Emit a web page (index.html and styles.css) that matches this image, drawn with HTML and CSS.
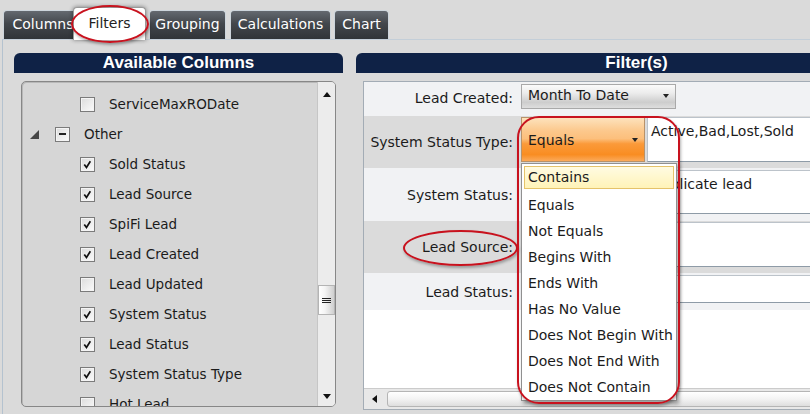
FILE: index.html
```html
<!DOCTYPE html>
<html>
<head>
<meta charset="utf-8">
<link rel="stylesheet" href="styles.css">
</head>
<body>
<div class="app">
  <nav class="tabs">
    <div class="tab tab-columns">Columns</div>
    <div class="tab tab-filters active">Filters</div>
    <div class="tab tab-grouping">Grouping</div>
    <div class="tab tab-calc">Calculations</div>
    <div class="tab tab-chart">Chart</div>
  </nav>
  <main class="content">
    <section class="col-left">
      <h2 class="panel-title">Available Columns</h2>
      <div class="listbox">
        <ul class="tree">
          <li class="item"><span class="cb"></span>ServiceMaxRODate</li>
          <li class="group"><span class="expander"></span><span class="tri"></span>Other</li>
          <li class="item"><span class="cb on"><svg viewBox="0 0 15 15"><path d="M3.8 7.6 L6.3 11 L10.8 3.8"/></svg></span>Sold Status</li>
          <li class="item"><span class="cb on"><svg viewBox="0 0 15 15"><path d="M3.8 7.6 L6.3 11 L10.8 3.8"/></svg></span>Lead Source</li>
          <li class="item"><span class="cb on"><svg viewBox="0 0 15 15"><path d="M3.8 7.6 L6.3 11 L10.8 3.8"/></svg></span>SpiFi Lead</li>
          <li class="item"><span class="cb on"><svg viewBox="0 0 15 15"><path d="M3.8 7.6 L6.3 11 L10.8 3.8"/></svg></span>Lead Created</li>
          <li class="item"><span class="cb"></span>Lead Updated</li>
          <li class="item"><span class="cb on"><svg viewBox="0 0 15 15"><path d="M3.8 7.6 L6.3 11 L10.8 3.8"/></svg></span>System Status</li>
          <li class="item"><span class="cb on"><svg viewBox="0 0 15 15"><path d="M3.8 7.6 L6.3 11 L10.8 3.8"/></svg></span>Lead Status</li>
          <li class="item"><span class="cb on"><svg viewBox="0 0 15 15"><path d="M3.8 7.6 L6.3 11 L10.8 3.8"/></svg></span>System Status Type</li>
          <li class="item"><span class="cb"></span>Hot Lead</li>
        </ul>
        <div class="vscroll">
          <div class="sb-btn"><span class="arr-up"></span></div>
          <div class="sb-track"><div class="sb-thumb"><span class="grip"></span></div></div>
          <div class="sb-btn sb-btn-down"><span class="arr-down"></span></div>
        </div>
      </div>
    </section>
    <section class="col-right">
      <h2 class="panel-title">Filter(s)</h2>
      <div class="filter-box">
        <div class="frow r1 light">
          <label class="flabel">Lead Created:</label>
          <div class="fctl">
            <div class="select gray w155"><span>Month To Date</span><span class="caret"></span></div>
          </div>
        </div>
        <div class="frow r2 dark">
          <label class="flabel">System Status Type:</label>
          <div class="fctl">
            <div class="select orange w124"><span>Equals</span><span class="caret"></span></div>
            <div class="tinput">Active,Bad,Lost,Sold</div>
          </div>
        </div>
        <div class="frow r3 light">
          <label class="flabel">System Status:</label>
          <div class="fctl">
            <div class="select gray w124"><span class="caret"></span></div>
            <div class="tinput">Duplicate lead</div>
          </div>
        </div>
        <div class="frow r4 dark">
          <label class="flabel">Lead Source:</label>
          <div class="fctl">
            <div class="select gray w124"><span class="caret"></span></div>
            <div class="tinput"></div>
          </div>
        </div>
        <div class="frow r5 light">
          <label class="flabel">Lead Status:</label>
          <div class="fctl">
            <div class="select gray w124"><span class="caret"></span></div>
            <div class="tinput"></div>
          </div>
        </div>
        <div class="fill"></div>
        <div class="hscroll">
          <div class="hs-btn"><span class="arr-left"></span></div>
          <div class="hs-thumb"></div>
        </div>
      </div>
    </section>
  </main>

  <ul class="popup">
    <li class="opt hl">Contains</li>
    <li class="opt">Equals</li>
    <li class="opt">Not Equals</li>
    <li class="opt">Begins With</li>
    <li class="opt">Ends With</li>
    <li class="opt">Has No Value</li>
    <li class="opt">Does Not Begin With</li>
    <li class="opt">Does Not End With</li>
    <li class="opt">Does Not Contain</li>
  </ul>

  <div class="mark mark-tab"></div>
  <div class="mark mark-label"></div>
  <div class="mark mark-list"></div>
</div>
</body>
</html>
```

FILE: styles.css
```css
* { box-sizing: border-box; }
html, body { margin: 0; padding: 0; }
body {
  width: 810px;
  height: 414px;
  overflow: hidden;
  background: #dadada;
  font-family: "DejaVu Sans", Verdana, sans-serif;
  font-size: 14px;
  color: #1b1b1b;
}
.app { position: relative; width: 810px; height: 414px; overflow: hidden; }

/* tabs */
.tabs {
  display: flex;
  align-items: flex-end;
  height: 39px;
  padding-left: 3px;
  position: relative;
  z-index: 2;
}
.tab {
  height: 29px;
  line-height: 27px;
  text-align: center;
  color: #fff;
  white-space: nowrap;
  background: linear-gradient(#646970, #43474c 45%, #303438);
  border: 1px solid #cdd5dc;
  border-bottom: none;
  border-radius: 4px 4px 0 0;
}
.tab-columns { width: 77px; padding-left: 3px; }
.tab-filters {
  width: 73px;
  height: 33px;
  margin-left: -7px;
  margin-bottom: -1px;
  padding-top: 2px;
  background: #fff;
  color: #222;
  border-color: #9a9a9a;
  box-shadow: 0 0 4px rgba(0, 0, 0, 0.45);
  position: relative;
  z-index: 1;
}
.tab-grouping { width: 77px; margin-left: 3px; }
.tab-calc { width: 101px; margin-left: 4px; }
.tab-chart { width: 55px; margin-left: 3px; }

/* content */
.content {
  display: flex;
  margin-left: 2px;
  height: 375px;
  border-top: 1px solid #c3ced8;
  border-left: 1px solid #b4c2cf;
  padding: 13px 0 0 11px;
}
.col-left { width: 329px; flex: none; }
.col-right { width: 561px; flex: none; margin-left: 13px; }
.panel-title {
  margin: 0;
  height: 20px;
  line-height: 20px;
  background: #0f2246;
  color: #fff;
  border-radius: 6px 6px 0 0;
  text-align: center;
  font-family: "Liberation Sans", Arial, sans-serif;
  font-weight: bold;
  font-size: 17px;
}

/* list box */
.listbox {
  margin: 8px 7px 0;
  height: 326px;
  border: 1px solid #878787;
  border-radius: 5px;
  background: #d6d6d6;
  display: flex;
  overflow: hidden;
  box-shadow: inset 1px 1px 0 #b8b8b8;
}
.tree {
  flex: 1;
  list-style: none;
  margin: 0;
  padding: 7px 0 0;
  font-size: 13.5px;
  overflow: hidden;
}
.tree li {
  height: 30px;
  display: flex;
  align-items: center;
  white-space: nowrap;
}
.item { padding-left: 58px; }
.group { padding-left: 8px; }
.expander {
  width: 0;
  height: 0;
  border-left: 9px solid transparent;
  border-bottom: 9px solid #474747;
  margin-right: 16px;
  margin-top: 1px;
}
.cb, .tri {
  width: 15px;
  height: 15px;
  border: 1px solid #7b7b7b;
  background: linear-gradient(135deg, #dcdcdc, #fbfbfb);
  box-shadow: inset 0 0 0 1px #f4f4f4;
  margin-right: 14px;
  flex: none;
  display: flex;
  align-items: center;
  justify-content: center;
}
.cb svg { width: 13px; height: 13px; }
.cb svg path { fill: none; stroke: #111; stroke-width: 2; }
.tri::before {
  content: "";
  width: 7px;
  height: 2px;
  background: #222;
}

.vscroll {
  width: 18px;
  flex: none;
  background: #ececec;
  border-left: 1px solid #c6c6c6;
  display: flex;
  flex-direction: column;
}
.sb-btn {
  height: 24px;
  display: flex;
  align-items: center;
  justify-content: center;
}
.sb-btn-down { height: 20px; }
.arr-up { width: 0; height: 0; border: 4px solid transparent; border-top: none; border-bottom: 5px solid #111; }
.arr-down { width: 0; height: 0; border: 4px solid transparent; border-bottom: none; border-top: 5px solid #111; }
.sb-track { flex: 1; }
.sb-thumb {
  margin-top: 179px;
  height: 30px;
  background: linear-gradient(90deg, #ffffff, #f4f4f4 40%, #cfcfcf);
  border: 1px solid #b4b4b4;
  display: flex;
  align-items: center;
  justify-content: center;
}
.grip {
  width: 9px;
  height: 5px;
  border-top: 1px solid #222;
  border-bottom: 1px solid #222;
  position: relative;
}
.grip::after {
  content: "";
  position: absolute;
  left: 0;
  right: 0;
  top: 1px;
  height: 1px;
  background: #222;
}

/* filters */
.filter-box {
  margin: 8px 7px 0;
  height: 329px;
  border: 1px solid #a3acb5;
  background: #fff;
  display: flex;
  flex-direction: column;
}
.frow {
  display: grid;
  grid-template-columns: 149px 1fr;
  column-gap: 8px;
  flex: none;
}
.light { background: #f1f2f4; }
.dark { background: #dbdbdb; }
.r1 { height: 34px; }
.r2 { height: 52px; }
.r3 { height: 53px; }
.r4 { height: 52px; }
.r5 { height: 37px; }
.flabel { align-self: center; text-align: right; white-space: nowrap; }
.r1 .flabel { margin-top: -3px; }
.fctl { display: flex; }
.r1 .fctl { padding-top: 2px; }
.r2 .fctl { padding-top: 1px; height: 46px; }
.r3 .fctl { padding-top: 2px; height: 46px; }
.r4 .fctl { padding-top: 1px; height: 46px; }
.r5 .fctl { padding-top: 2px; height: 30px; }

.select {
  display: flex;
  align-items: center;
  justify-content: space-between;
  padding: 0 6px 0 6px;
  border: 1px solid #a9a9a9;
  flex: none;
  white-space: nowrap;
}
.w155 { width: 155px; height: 25px; padding-bottom: 3px; }
.w124 { width: 124px; margin-right: 2px; justify-content: flex-end; }
.orange.w124 { justify-content: space-between; }
.gray { background: linear-gradient(#fbfbfb, #ececec 35%, #cdcdcd 75%, #dedede); }
.orange {
  background: linear-gradient(#fde2bc, #fcc88c 30%, #fcbf7c 48%, #fb9a3a 60%, #f98d22 85%, #fbaa5a);
  border-color: #b8926a;
}
.caret { width: 0; height: 0; border: 3px solid transparent; border-bottom: none; border-top: 4px solid #222; margin-top: 1px; }
.tinput {
  flex: 1;
  background: #fff;
  border: 1px solid #bcc3ca;
  border-bottom-color: #8e9ba7;
  padding: 5px 3px;
  line-height: 17px;
  white-space: nowrap;
}
.fill { flex: 1; background: #fff; }
.hscroll {
  height: 21px;
  flex: none;
  background: #e8e8e8;
  border-top: 1px solid #cbcbcb;
  display: flex;
  align-items: center;
}
.hs-btn { width: 20px; height: 100%; display: flex; align-items: center; justify-content: center; }
.arr-left { width: 0; height: 0; border: 4px solid transparent; border-left: none; border-right: 5px solid #111; }
.hs-thumb {
  margin-left: 3px;
  flex: 1;
  height: 16px;
  background: linear-gradient(#ffffff, #f3f3f3 50%, #dedede);
  border: 1px solid #b5b5b5;
  border-radius: 3px 0 0 3px;
}

/* dropdown popup */
.popup {
  position: absolute;
  left: 521px;
  top: 163px;
  width: 156px;
  height: 238px;
  margin: 0;
  padding: 2px 0 0;
  list-style: none;
  background: #fff;
  border: 1px solid #909090;
  box-shadow: 2px 3px 4px rgba(0, 0, 0, 0.35);
  z-index: 5;
}
.opt {
  height: 26px;
  line-height: 26px;
  padding-left: 6px;
  white-space: nowrap;
}
.opt.hl {
  height: 23px;
  line-height: 21px;
  margin: 0 2px 3px;
  padding-left: 3px;
  border: 1px solid #e5c36a;
  background: linear-gradient(#fffbe2, #fff3b8);
}

/* red annotation marks */
.mark {
  position: absolute;
  border: 2px solid #c8121e;
  box-shadow: 1px 2px 3px rgba(0, 0, 0, 0.3);
  z-index: 10;
}
.mark-tab { left: 71px; top: 5px; width: 78px; height: 38px; border-radius: 50%; }
.mark-label { left: 403px; top: 230px; width: 115px; height: 36px; border-radius: 50%; }
.mark-list { left: 517px; top: 116px; width: 163px; height: 288px; border-radius: 22px; }
```
